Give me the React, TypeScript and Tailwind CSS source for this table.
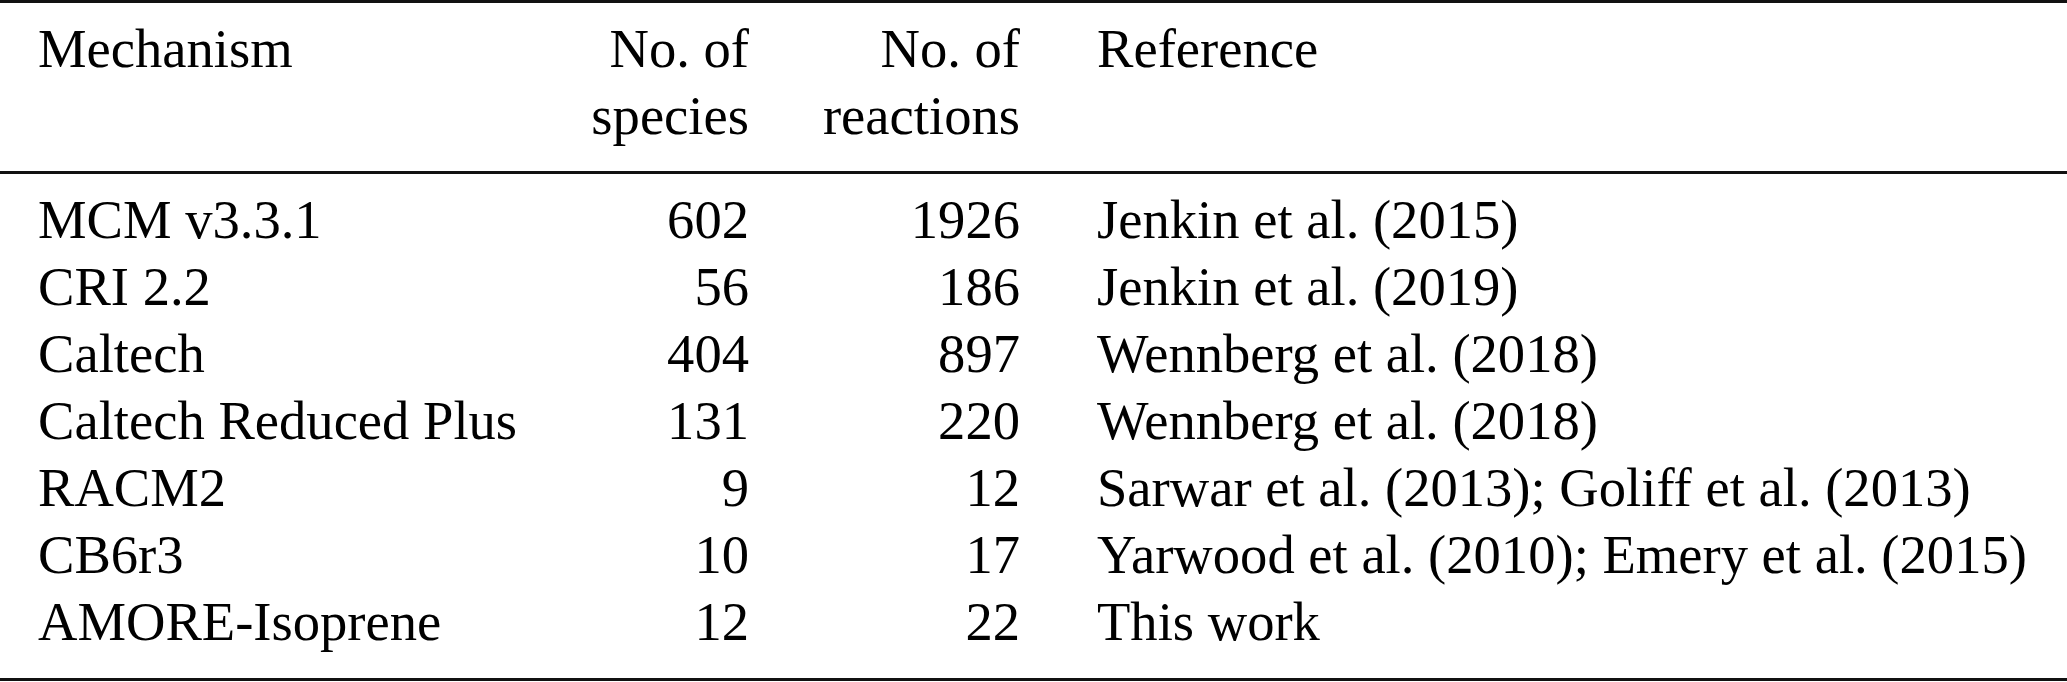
const rows = [
  { name: "MCM v3.3.1", species: "602", reactions: "1926", ref: "Jenkin et al. (2015)" },
  { name: "CRI 2.2", species: "56", reactions: "186", ref: "Jenkin et al. (2019)" },
  { name: "Caltech", species: "404", reactions: "897", ref: "Wennberg et al. (2018)" },
  { name: "Caltech Reduced Plus", species: "131", reactions: "220", ref: "Wennberg et al. (2018)" },
  { name: "RACM2", species: "9", reactions: "12", ref: "Sarwar et al. (2013); Goliff et al. (2013)" },
  { name: "CB6r3", species: "10", reactions: "17", ref: "Yarwood et al. (2010); Emery et al. (2015)" },
  { name: "AMORE-Isoprene", species: "12", reactions: "22", ref: "This work" },
];

export default function App() {
  return (
    <div className="w-[2067px] h-[682px] bg-white text-black font-['Liberation_Serif','Times_New_Roman',serif] text-[54.6px] leading-[67px]">
      <div className="h-[3px] bg-[#111]" />

      {/* header */}
      <div className="grid grid-cols-[555px_194px_271px_1fr] pt-[12px] pb-[22px]">
        <div className="pl-[38px]">Mechanism</div>
        <div className="text-right">
          No. of
          <br />
          species
        </div>
        <div className="text-right">
          No. of
          <br />
          reactions
        </div>
        <div className="pl-[77px]">Reference</div>
      </div>

      <div className="h-[3px] bg-[#111]" />

      {/* body */}
      <div className="pt-[12px] pb-[23px]">
        {rows.map((r) => (
          <div key={r.name} className="grid grid-cols-[555px_194px_271px_1fr] whitespace-nowrap">
            <div className="pl-[38px]">{r.name}</div>
            <div className="text-right">{r.species}</div>
            <div className="text-right">{r.reactions}</div>
            <div className="pl-[77px]">{r.ref}</div>
          </div>
        ))}
      </div>

      <div className="h-[3px] bg-[#111]" />
    </div>
  );
}
